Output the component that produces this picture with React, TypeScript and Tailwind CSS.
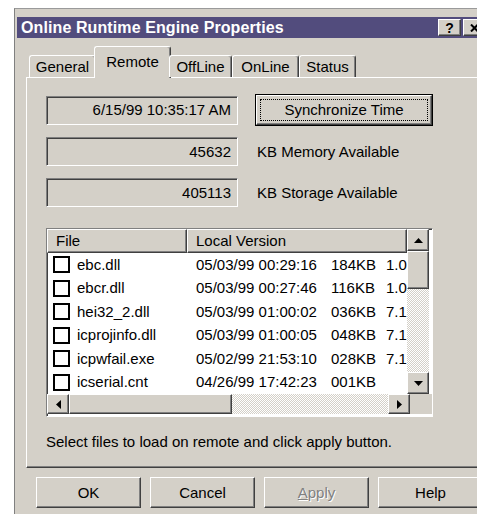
import React from "react"

// classic 3D edges
const raised =
  "border border-t-white border-l-white border-r-[#404040] border-b-[#404040] shadow-[inset_-1px_-1px_0_#808080]"
const sunken =
  "border border-t-[#808080] border-l-[#808080] border-r-white border-b-white shadow-[inset_1px_1px_0_#404040]"
const dither = "bg-[repeating-conic-gradient(#d4d0c8_0%_25%,#ffffff_0%_50%)] bg-[length:2px_2px]"

const files = [
  ["ebc.dll", "05/03/99 00:29:16", "184KB", "1.0"],
  ["ebcr.dll", "05/03/99 00:27:46", "116KB", "1.0"],
  ["hei32_2.dll", "05/03/99 01:00:02", "036KB", "7.1"],
  ["icprojinfo.dll", "05/03/99 01:00:05", "048KB", "7.1"],
  ["icpwfail.exe", "05/02/99 21:53:10", "028KB", "7.1"],
  ["icserial.cnt", "04/26/99 17:42:23", "001KB", ""],
]

const tabs = [
  { label: "General", w: "w-[67px]" },
  { label: "Remote", w: "w-[71px]", active: true },
  { label: "OffLine", w: "w-[63px]" },
  { label: "OnLine", w: "w-[67px]" },
  { label: "Status", w: "w-[57px]" },
]

function Arrow({ dir }: { dir: "up" | "down" | "left" | "right" }) {
  if (dir === "up" || dir === "down") {
    return (
      <svg width="9" height="5" viewBox="0 0 9 5">
        <polygon points={dir === "up" ? "0,5 4.5,0 9,5" : "0,0 9,0 4.5,5"} fill="#000" />
      </svg>
    )
  }
  return (
    <svg width="5" height="9" viewBox="0 0 5 9">
      <polygon points={dir === "left" ? "5,0 5,9 0,4.5" : "0,0 0,9 5,4.5"} fill="#000" />
    </svg>
  )
}

function ScrollBtn({ dir, className = "" }: { dir: "up" | "down" | "left" | "right"; className?: string }) {
  return (
    <div className={`${raised} bg-[#d4d0c8] w-[22px] flex items-center justify-center shrink-0 ${className}`}>
      <Arrow dir={dir} />
    </div>
  )
}

function Field({ value }: { value: string }) {
  return (
    <div className={`${sunken} w-[192px] h-[29px] flex items-center justify-end pr-[6px]`}>{value}</div>
  )
}

function DialogButton({ children, disabled }: { children: React.ReactNode; disabled?: boolean }) {
  return (
    <div
      className={`${raised} w-[105px] h-[31px] flex items-center justify-center ${
        disabled ? "text-[#808080] [text-shadow:1px_1px_0_#fff]" : ""
      }`}
    >
      {children}
    </div>
  )
}

function FileList() {
  return (
    <div className={`${sunken} w-[387px] h-[189px] bg-white flex flex-col`}>
      <div className="flex h-[165px]">
        <div className="w-[360px] overflow-hidden">
          <div className="flex h-[24px] bg-[#d4d0c8] whitespace-nowrap">
            <div className={`${raised} w-[140px] pl-[8px] flex items-center`}>File</div>
            <div className={`${raised} w-[220px] pl-[8px] flex items-center`}>Local Version</div>
          </div>
          {files.map(([name, date, size, ver]) => (
            <div key={name} className="flex h-[23.5px] items-center whitespace-nowrap">
              <div className="w-[140px] flex items-center pl-[6px] gap-[7px]">
                <div className="w-[17px] h-[17px] border-2 border-black bg-white shrink-0" />
                <span>{name}</span>
              </div>
              <span className="w-[144px] pl-[9px]">{date}</span>
              <span className="w-[55px]">{size}</span>
              <span>{ver}</span>
            </div>
          ))}
        </div>
        <div className="w-[22px] flex flex-col">
          <ScrollBtn dir="up" className="h-[22px]" />
          <div className={`${raised} bg-[#d4d0c8] h-[38px]`} />
          <div className={`flex-1 ${dither}`} />
          <ScrollBtn dir="down" className="h-[22px]" />
        </div>
      </div>
      <div className="flex h-[20px]">
        <ScrollBtn dir="left" />
        <div className={`${raised} bg-[#d4d0c8] w-[163px]`} />
        <div className={`flex-1 ${dither}`} />
        <ScrollBtn dir="right" />
        <div className="w-[22px] bg-[#d4d0c8]" />
      </div>
    </div>
  )
}

export default function App() {
  return (
    <div className="w-[477px] h-[514px] overflow-hidden bg-white pt-[8px] pl-[14px] font-['Liberation_Sans',Arial,sans-serif] text-[15px] text-black leading-[18px]">
      <div className="w-[478px] h-[520px] bg-[#d4d0c8] border-l border-t border-l-[#808080] border-t-[#9a9a9a] pl-[2px] pr-[2px] pt-[8px]">
        {/* caption */}
        <div className="h-[21px] bg-[#524c7d] flex items-center pl-[4px] pr-[5px]">
          <span className="text-white font-bold text-[16px] tracking-[0.1px]">Online Runtime Engine Properties</span>
          <div className="ml-auto flex gap-[2px]">
            <div className={`${raised} bg-[#d4d0c8] w-[23px] h-[17px] flex items-center justify-center font-bold text-[14px]`}>
              ?
            </div>
            <div className={`${raised} bg-[#d4d0c8] w-[22px] h-[17px] flex items-center justify-center`}>
              <svg width="9" height="8" viewBox="0 0 9 8">
                <path d="M1 0.5 L8 7.5 M8 0.5 L1 7.5" stroke="#000" strokeWidth="2" />
              </svg>
            </div>
          </div>
        </div>

        <div className="pl-[9px] pt-[11px]">
          {/* tab strip */}
          <div className="relative z-10 -mb-px flex items-end h-[29px] pl-[3px]">
            {tabs.map((t) =>
              t.active ? (
                <div
                  key={t.label}
                  className={`${t.w} h-[29px] box-content -mx-[2px] px-[2px] bg-[#d4d0c8] rounded-t-[3px] border-t border-l border-t-white border-l-white border-r border-r-[#404040] shadow-[inset_-1px_0_0_#808080] flex items-center justify-center pb-[2px]`}
                >
                  {t.label}
                </div>
              ) : (
                <div
                  key={t.label}
                  className={`${t.w} h-[22px] mb-px bg-[#d4d0c8] rounded-t-[3px] border-t border-l border-t-white border-l-white border-r border-r-[#404040] shadow-[inset_-1px_0_0_#808080] flex items-center justify-center`}
                >
                  {t.label}
                </div>
              )
            )}
          </div>

          {/* tab page */}
          <div className={`${raised} w-[460px] h-[391px] pl-[19px] pt-[16px]`}>
            <div className="flex items-center h-[32px]">
              <Field value="6/15/99 10:35:17 AM" />
              <div className="ml-[17px] w-[178px] h-[32px] border border-black">
                <div className={`${raised} h-full p-[3px] flex`}>
                  <div className="flex-1 border border-dotted border-black flex items-center justify-center">
                    Synchronize Time
                  </div>
                </div>
              </div>
            </div>
            <div className="flex items-center mt-[11px]">
              <Field value="45632" />
              <span className="ml-[19px]">KB Memory Available</span>
            </div>
            <div className="flex items-center mt-[12px]">
              <Field value="405113" />
              <span className="ml-[19px]">KB Storage Available</span>
            </div>

            <div className="mt-[21px]">
              <FileList />
            </div>

            <p className="mt-[16px]">Select files to load on remote and click apply button.</p>
          </div>

          {/* dialog buttons */}
          <div className="flex gap-[9px] mt-[9px] pl-[10px]">
            <DialogButton>OK</DialogButton>
            <DialogButton>Cancel</DialogButton>
            <DialogButton disabled>
              <span>
                <span className="underline">A</span>pply
              </span>
            </DialogButton>
            <DialogButton>Help</DialogButton>
          </div>
        </div>
      </div>
    </div>
  )
}
